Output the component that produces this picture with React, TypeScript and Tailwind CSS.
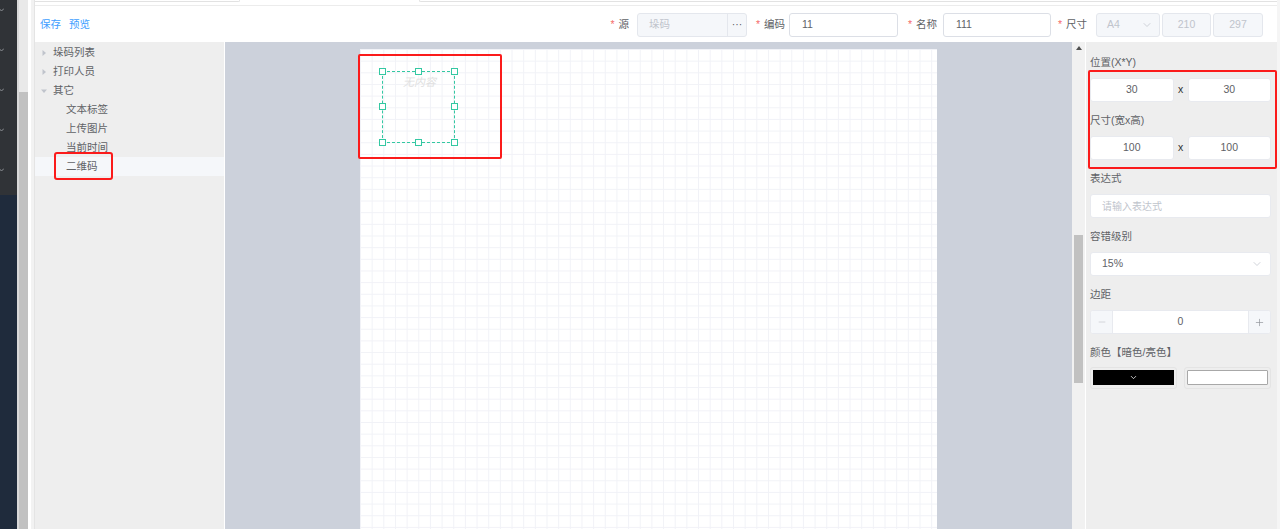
import { ChevronDown, Minus, Plus } from 'lucide-react'

function Caret({ open }: { open?: boolean }) {
  return (
    <svg width="6" height="6" viewBox="0 0 6 6" className="shrink-0">
      {open ? <polygon points="0,1.5 6,1.5 3,5" fill="#c0c4cc" /> : <polygon points="1.5,0 5,3 1.5,6" fill="#c0c4cc" />}
    </svg>
  )
}

function TreeRow({ label, level, open, active }: { label: string; level: number; open?: boolean; active?: boolean }) {
  return (
    <div className={`flex h-[19px] items-center ${active ? 'bg-[#f5f7fa]' : ''} ${level === 0 ? 'pl-[6px]' : 'pl-[31px]'}`}>
      {level === 0 && <Caret open={open} />}
      <span className={level === 0 ? 'ml-[6px]' : ''}>{label}</span>
    </div>
  )
}

function Label({ text, w, pr }: { text: string; w: string; pr: string }) {
  return (
    <div className={`flex shrink-0 items-center justify-end text-[#606266] ${w} ${pr}`}>
      <span className="mr-[4px] text-[#f56c6c]">*</span>
      <span>{text}</span>
    </div>
  )
}

function Handle({ pos }: { pos: string }) {
  return <div className={`absolute h-[7px] w-[7px] border border-[#34c8a2] bg-white ${pos}`} />
}

function PanelLabel({ children }: { children: React.ReactNode }) {
  return <div className="h-[20px] leading-[20px] text-[#606266]">{children}</div>
}

function PairInputs({ a, b }: { a: string; b: string }) {
  return (
    <div className="mt-[6px] mb-[8px] flex h-[24px] items-center">
      <div className="flex h-full flex-1 items-center justify-center rounded-[3px] border border-[#e8eaef] bg-white text-[#606266]">{a}</div>
      <span className="w-[14px] text-center text-[#303133]">x</span>
      <div className="flex h-full flex-1 items-center justify-center rounded-[3px] border border-[#e8eaef] bg-white text-[#606266]">{b}</div>
    </div>
  )
}

export default function App() {
  return (
    <div className="relative flex h-[529px] w-[1280px] overflow-hidden bg-white font-['Liberation_Sans','Noto_Sans_CJK_SC',sans-serif] text-[10.5px] text-[#606266]">
      {/* app nav rail */}
      <div className="flex w-[17px] flex-col">
        <div className="flex h-[195px] flex-col gap-[36px] bg-[#303337] pt-[8px]">
          {[0, 1, 2, 3, 4].map(i => (
            <svg key={i} width="5" height="4" viewBox="0 0 5 4" className="-ml-[1px]">
              <polyline points="0,0.5 2.5,3 5,0.5" fill="none" stroke="#8d9196" strokeWidth="1" />
            </svg>
          ))}
        </div>
        <div className="flex-1 bg-[#1f2b3c]" />
      </div>
      <div className="w-[2px] bg-[#d9d9d9]" />
      <div className="flex w-[9px] flex-col bg-[#e9e9e9]">
        <div className="h-[92px]" />
        <div className="flex-1 bg-[#c1c1c1]" />
      </div>
      <div className="w-[3px] bg-white" />
      <div className="w-[4px] border-r border-[#e4e4e4] bg-[#f2f2f2]" />

      {/* main */}
      <div className="flex min-w-0 flex-1 flex-col">
        <div className="flex h-[6px] border-b border-[#ececec] bg-white">
          <div className="h-[2px] w-[205px] rounded-br-[2px] border-r border-b border-[#e2e2e2]" />
          <div className="w-[179px]" />
          <div className="h-[2px] flex-1 rounded-bl-[2px] border-l border-b border-[#e2e2e2]" />
        </div>

        {/* toolbar */}
        <div className="flex h-[36px] items-center bg-white pl-[5px] pr-[14px] pt-[2px]">
          <span className="text-[#409eff]">保存</span>
          <span className="ml-[8px] text-[#409eff]">预览</span>
          <div className="ml-auto flex h-[24px] items-center">
            <Label text="源" w="w-[37px]" pr="pr-[8px]" />
            <div className="flex h-full w-[110px] items-center rounded-[3px] border border-[#e4e7ed] bg-[#f5f7fa]">
              <span className="flex-1 pl-[11px] text-[#c0c4cc]">垛码</span>
              <span className="flex h-full w-[19px] items-center justify-center border-l border-[#e4e7ed] text-[#606266]">···</span>
            </div>
            <Label text="编码" w="w-[42px]" pr="pr-[4px]" />
            <div className="flex h-full w-[109px] items-center rounded-[3px] border border-[#dcdfe6] bg-white pl-[12px] text-[#606266]">11</div>
            <Label text="名称" w="w-[45px]" pr="pr-[6px]" />
            <div className="flex h-full w-[108px] items-center rounded-[3px] border border-[#dcdfe6] bg-white pl-[12px] text-[#606266]">111</div>
            <Label text="尺寸" w="w-[45px]" pr="pr-[9px]" />
            <div className="flex h-full w-[64px] items-center justify-between rounded-[3px] border border-[#e4e7ed] bg-[#f5f7fa] pl-[10px] pr-[6px] text-[#c0c4cc]">
              <span>A4</span>
              <ChevronDown size={12} strokeWidth={1.5} color="#c0c4cc" />
            </div>
            <div className="ml-[2px] flex h-full w-[49px] items-center justify-center rounded-[3px] border border-[#e4e7ed] bg-[#f5f7fa] text-[#c0c4cc]">210</div>
            <div className="ml-[2px] flex h-full w-[50px] items-center justify-center rounded-[3px] border border-[#e4e7ed] bg-[#f5f7fa] text-[#c0c4cc]">297</div>
          </div>
        </div>

        {/* body */}
        <div className="flex min-h-0 flex-1">
          <div className="w-[190px] shrink-0 border-r border-white bg-[#eeeeee] pt-[1px]">
            <TreeRow label="垛码列表" level={0} />
            <TreeRow label="打印人员" level={0} />
            <TreeRow label="其它" level={0} open />
            <TreeRow label="文本标签" level={1} />
            <TreeRow label="上传图片" level={1} />
            <TreeRow label="当前时间" level={1} />
            <TreeRow label="二维码" level={1} active />
          </div>

          <div className="flex min-w-0 flex-1 justify-center overflow-hidden bg-[#ccd1db] pt-[7px]">
            <div className="relative h-[900px] w-[577px] shrink-0 bg-white bg-[linear-gradient(to_right,#f1f2f7_1px,transparent_1px),linear-gradient(to_bottom,#f1f2f7_1px,transparent_1px)] bg-[size:11.66px_11.66px]">
              <div className="absolute left-[22px] top-[22px] h-[72px] w-[73px] border border-dashed border-[#34c8a2]">
                <div className="mt-[2px] pl-[2px] text-center text-[11px] italic text-[#e0e0e0]">无内容</div>
                <Handle pos="-left-[4px] -top-[4px]" />
                <Handle pos="left-[32px] -top-[4px]" />
                <Handle pos="-right-[4px] -top-[4px]" />
                <Handle pos="-left-[4px] top-[31px]" />
                <Handle pos="-right-[4px] top-[31px]" />
                <Handle pos="-left-[4px] -bottom-[4px]" />
                <Handle pos="left-[32px] -bottom-[4px]" />
                <Handle pos="-right-[4px] -bottom-[4px]" />
              </div>
            </div>
          </div>

          {/* scrollbar */}
          <div className="flex w-[13px] shrink-0 flex-col items-center bg-[#f1f1f1]">
            <svg width="6" height="4" viewBox="0 0 6 4" className="mt-[4px]">
              <polygon points="0,4 3,0 6,4" fill="#505050" />
            </svg>
            <div className="mt-[185px] h-[148px] w-[9px] bg-[#c1c1c1]" />
          </div>

          {/* properties */}
          <div className="w-[192px] shrink-0 border-l border-white bg-[#eeeeee] pl-[4px] pr-[6px] pt-[10px]">
            <PanelLabel>位置(X*Y)</PanelLabel>
            <PairInputs a="30" b="30" />
            <PanelLabel>尺寸(宽x高)</PanelLabel>
            <PairInputs a="100" b="100" />
            <PanelLabel>表达式</PanelLabel>
            <div className="mt-[6px] mb-[8px] flex h-[24px] items-center rounded-[3px] border border-[#e8eaef] bg-white pl-[11px] text-[10px] text-[#c0c4cc]">请输入表达式</div>
            <PanelLabel>容错级别</PanelLabel>
            <div className="mt-[6px] mb-[8px] flex h-[24px] items-center justify-between rounded-[3px] border border-[#e8eaef] bg-white pl-[11px] pr-[7px] text-[#606266]">
              <span>15%</span>
              <ChevronDown size={12} strokeWidth={1.5} color="#c0c4cc" />
            </div>
            <PanelLabel>边距</PanelLabel>
            <div className="mt-[6px] mb-[8px] flex h-[24px] items-center overflow-hidden rounded-[3px] border border-[#e8eaef] bg-white">
              <div className="flex h-full w-[22px] items-center justify-center border-r border-[#e8eaef] bg-[#f5f7fa]">
                <Minus size={10} strokeWidth={1.5} color="#c0c4cc" />
              </div>
              <span className="flex-1 text-center">0</span>
              <div className="flex h-full w-[22px] items-center justify-center border-l border-[#e8eaef] bg-[#f5f7fa]">
                <Plus size={11} strokeWidth={1.5} color="#909399" />
              </div>
            </div>
            <PanelLabel>颜色【暗色/亮色】</PanelLabel>
            <div className="mt-[5px] flex h-[22px] items-center">
              <div className="flex h-full w-[87px] rounded-[3px] border border-[#e4e4e4] p-[2px] pb-[3px]">
                <div className="flex flex-1 items-center justify-center bg-black">
                  <ChevronDown size={9} strokeWidth={2} color="#ffffff" />
                </div>
              </div>
              <div className="ml-[7px] flex h-full w-[87px] rounded-[3px] border border-[#e4e4e4] p-[2px] pb-[3px]">
                <div className="flex-1 rounded-[1px] border border-[#a8a8a8] bg-white" />
              </div>
            </div>
          </div>
        </div>
      </div>
      <div className="w-[3px] bg-[#f5f5f5]" />

      {/* annotation boxes */}
      <div className="pointer-events-none absolute left-[54px] top-[152px] h-[28px] w-[59px] rounded-[3px] border-2 border-[#fb1b1b]" />
      <div className="pointer-events-none absolute left-[358px] top-[54px] h-[105px] w-[144px] rounded-[2px] border-2 border-[#fb1b1b]" />
      <div className="pointer-events-none absolute left-[1088px] top-[70px] h-[99px] w-[189px] rounded-[2px] border-2 border-[#fb1b1b]" />
    </div>
  )
}
